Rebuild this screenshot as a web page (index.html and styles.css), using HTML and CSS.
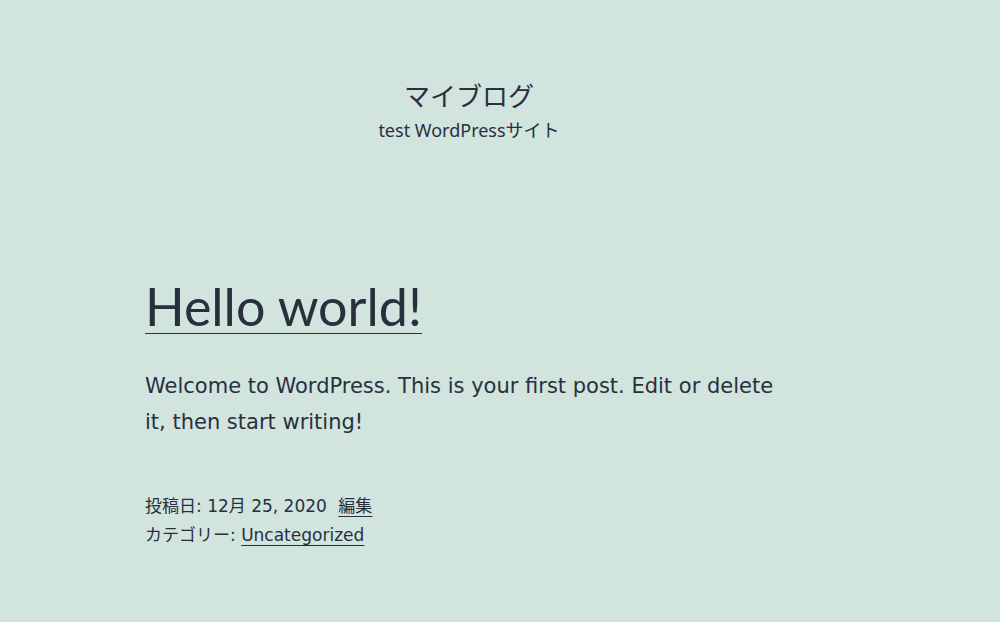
FILE: index.html
```html
<!DOCTYPE html>
<html lang="ja">
<head>
    <meta charset="UTF-8">
    <meta name="viewport" content="width=device-width, initial-scale=1.0">
    <title>マイブログ</title>
    <link rel="stylesheet" href="styles.css">
</head>
<body>

    <header class="site-header">
        <p class="site-title">マイブログ</p>
        <p class="site-description">test WordPressサイト</p>
    </header>

    <main class="site-main">
        <article class="post">
            <h2 class="entry-title"><a href="#">Hello world!</a></h2>
            <div class="entry-content">
                <p>Welcome to WordPress. This is your first post. Edit or delete it, then start writing!</p>
            </div>
            <footer class="entry-footer">
                <div>投稿日: 12月 25, 2020 <a href="#" class="edit-link">編集</a></div>
                <div>カテゴリー: <a href="#">Uncategorized</a></div>
            </footer>
        </article>
    </main>

</body>
</html>
```

FILE: styles.css
```css
body {
    font-family: "Noto Sans", "Noto Sans CJK JP", sans-serif;
    background-color: #d1e4dd;
    color: #28303d;
    margin: 0;
    padding: 0;
}

a {
    color: #28303d;
    text-decoration: underline;
    text-decoration-thickness: 1px;
    text-underline-offset: 4px;
}

.site-header {
    width: 938px;
    text-align: center;
    padding-top: 78px;
}

.site-title {
    margin: 0;
    font-size: 26px;
    line-height: 36px;
}

.site-description {
    margin: 0;
    font-size: 18px;
    line-height: 32px;
}

.site-main {
    padding: 128px 0 0 145px;
}

.post {
    max-width: 650px;
}

.entry-title {
    margin: 0;
    font-family: Lato, "Noto Sans", sans-serif;
    font-size: 52px;
    font-weight: 400;
    line-height: 64px;
}

.entry-title a {
    text-underline-offset: 7px;
}

.entry-content p {
    margin: 30px 0 0;
    font-family: "DejaVu Sans", "Noto Sans CJK JP", sans-serif;
    font-size: 21px;
    line-height: 36px;
}

.entry-footer {
    margin-top: 52px;
    font-family: "DejaVu Sans", "Noto Sans CJK JP", sans-serif;
    font-size: 17px;
    line-height: 29px;
}

.edit-link {
    margin-left: 6px;
}
```
